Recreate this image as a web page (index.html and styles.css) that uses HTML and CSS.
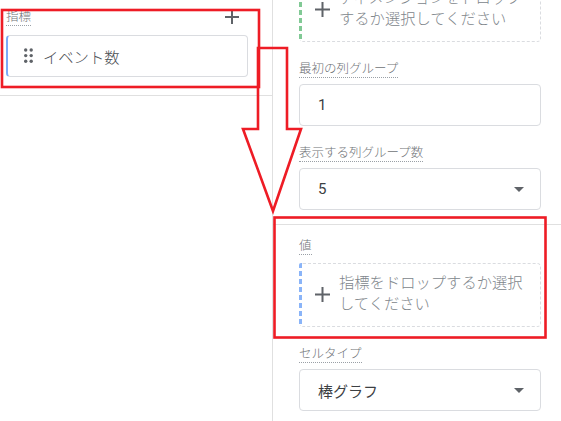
FILE: index.html
```html
<!DOCTYPE html>
<html lang="ja">
<head>
  <meta charset="utf-8">
  <title>設定</title>
  <link rel="stylesheet" href="styles.css">
</head>
<body>
  <div class="page">
    <aside class="left">
      <section class="metrics">
        <div class="head">
          <span class="label">指標</span>
          <svg class="add" width="16" height="16" viewBox="0 0 16 16"><path d="M8 1v14M1 8h14" /></svg>
        </div>
        <div class="chip">
          <svg class="grip" width="9" height="16" viewBox="0 0 9 16">
            <circle cx="1.7" cy="2" r="1.7" /><circle cx="7.2" cy="2" r="1.7" />
            <circle cx="1.7" cy="7.6" r="1.7" /><circle cx="7.2" cy="7.6" r="1.7" />
            <circle cx="1.7" cy="13.2" r="1.7" /><circle cx="7.2" cy="13.2" r="1.7" />
          </svg>
          <span>イベント数</span>
        </div>
      </section>
    </aside>

    <main class="right">
      <div class="group first">
        <div class="drop green">
          <svg class="add" width="15" height="15" viewBox="0 0 15 15"><path d="M7.5 0v15M0 7.5h15" /></svg>
          <span class="drop-text">ディメンションをドロップするか選択してください</span>
        </div>
        <div class="field">
          <span class="label">最初の列グループ</span>
          <div class="input">1</div>
        </div>
        <div class="field">
          <span class="label">表示する列グループ数</span>
          <div class="select">5<i class="caret"></i></div>
        </div>
      </div>

      <div class="group second">
        <div class="field no-top">
          <span class="label">値</span>
          <div class="drop blue">
            <svg class="add" width="15" height="15" viewBox="0 0 15 15"><path d="M7.5 0v15M0 7.5h15" /></svg>
            <span class="drop-text">指標をドロップするか選択してください</span>
          </div>
        </div>
        <div class="field">
          <span class="label">セルタイプ</span>
          <div class="select">棒グラフ<i class="caret"></i></div>
        </div>
      </div>
    </main>

    <!-- annotations drawn over the screenshot -->
    <svg class="marks" width="561" height="421" viewBox="0 0 561 421">
      <rect x="2" y="10" width="257" height="77" />
      <polygon points="258,48 287,48 287,129 301,129 273,211 243,129 258,129" />
      <rect x="274.5" y="217.5" width="271" height="120" />
    </svg>
  </div>
</body>
</html>
```

FILE: styles.css
```css
body {
  margin: 0;
  font-family: Roboto, "Noto Sans CJK JP", sans-serif;
  font-weight: 300;
  background-color: #ffffff;
  color: #4a4e52;
}

.page {
  position: relative;
  display: flex;
  width: 561px;
  height: 421px;
  overflow: hidden;
}

.left {
  flex: none;
  width: 272px;
  border-right: 1px solid #e0e0e0;
}

.metrics {
  padding: 9px 24px 18px 6px;
  border-bottom: 1px solid #e0e0e0;
}

.head {
  display: flex;
  justify-content: space-between;
  align-items: flex-start;
  padding-right: 8px;
  margin-bottom: 9px;
}

.label {
  display: inline-block;
  font-size: 12.5px;
  line-height: 16px;
  color: #6f7377;
  border-bottom: 1px dotted #9aa0a6;
}

.add path {
  stroke: #5f6368;
  stroke-width: 2;
  fill: none;
}

.chip {
  display: flex;
  align-items: center;
  gap: 10px;
  height: 42px;
  box-sizing: border-box;
  padding-left: 16px;
  border: 1px solid #dadce0;
  border-left: 2px solid #7baaf7;
  border-radius: 4px;
  font-size: 15.3px;
}

.grip circle {
  fill: #5f6368;
}

.right {
  flex: 1;
}

.group {
  padding: 0 20px 0 26px;
}

.group.first {
  margin-top: -22px;
  padding-bottom: 14px;
}

.group.second {
  padding-top: 13px;
  border-top: 1px solid #e0e0e0;
}

.field {
  display: flex;
  flex-direction: column;
  align-items: flex-start;
  gap: 6px;
  margin-top: 19px;
}

.field.no-top {
  margin-top: 0;
}

.input,
.select,
.drop {
  align-self: stretch;
}

.input,
.select {
  display: flex;
  align-items: center;
  height: 42px;
  box-sizing: border-box;
  padding: 0 16px 0 18px;
  border: 1px solid #dadce0;
  border-radius: 4px;
  font-size: 15px;
  font-weight: 400;
  color: #3c4043;
}

.select {
  justify-content: space-between;
}

.caret {
  width: 0;
  height: 0;
  border-left: 5px solid transparent;
  border-right: 5px solid transparent;
  border-top: 5px solid #5f6368;
}

.drop {
  position: relative;
  display: flex;
  align-items: center;
  gap: 9px;
  padding: 9px 12px 11px 15px;
  border: 1px dashed #dadce0;
  border-left-color: transparent;
  border-radius: 4px;
  color: #80868b;
  font-size: 15.3px;
  line-height: 21px;
}

.field .drop {
  margin-top: 2px;
}

.drop::before {
  content: "";
  position: absolute;
  left: -1px;
  top: -1px;
  bottom: -1px;
  width: 3px;
  border-radius: 2px 0 0 2px;
  background: repeating-linear-gradient(to bottom, var(--bar) 0 5px, transparent 5px 8px);
}

.drop.green {
  --bar: #81c995;
}

.drop.blue {
  --bar: #8ab4f8;
}

.drop .add {
  flex: none;
}

.marks {
  position: absolute;
  top: 0;
  left: 0;
  pointer-events: none;
}

.marks rect,
.marks polygon {
  fill: none;
  stroke: #ee1c25;
  stroke-width: 2.6;
}
```
